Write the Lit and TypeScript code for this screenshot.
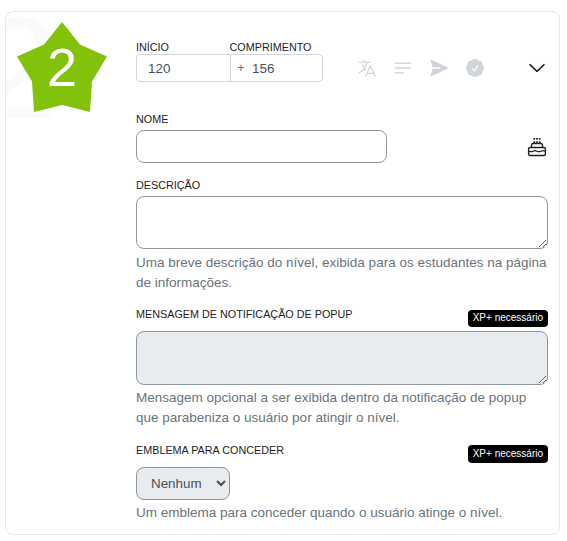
import { LitElement, html, css, svg } from "lit";
import { customElement } from "lit/decorators.js";

const translateIcon = svg`<svg width="20" height="20" viewBox="0.700 0.700 22.500 22.500" fill="none" stroke="currentColor" stroke-width="1.5" stroke-linecap="round" stroke-linejoin="round"><path d="m10.5 21 5.25-11.25L21 21m-9-3h7.500M3 5.621a48.474 48.474 0 0 1 6-.371m0 0c1.120 0 2.233.038 3.334.114M9 5.250V3m3.334 2.364C11.176 10.658 7.690 15.080 3 17.502m9.334-12.138c.896.061 1.785.147 2.666.257m-4.589 8.495a18.023 18.023 0 0 1-3.827-5.802"/></svg>`;
const linesIcon = svg`<svg width="20" height="20" viewBox="0 0 24 24" fill="none" stroke="currentColor" stroke-width="1.8" stroke-linecap="round"><path d="M3 6.300h18M3 12h18M3 17.700h9"/></svg>`;
const sendIcon = svg`<svg width="20" height="20" viewBox="0 0 24 24" fill="currentColor"><path d="M2.300 1.800Q1.600 1.500 1.700 2.500L4.300 11.100H13.500V12.900H4.300L1.700 21.500Q1.600 22.500 2.600 22.100L22 13Q23 12 22 11Z"/></svg>`;
const badgeIcon = svg`<svg width="20" height="20" viewBox="1.200 1.200 21.600 21.600" fill="currentColor"><path fill-rule="evenodd" d="M8.603 3.799A4.490 4.490 0 0 1 12 2.250c1.357 0 2.573.600 3.397 1.549a4.490 4.490 0 0 1 3.498 1.307 4.491 4.491 0 0 1 1.307 3.497A4.490 4.490 0 0 1 21.750 12a4.490 4.490 0 0 1-1.549 3.397 4.491 4.491 0 0 1-1.307 3.497 4.491 4.491 0 0 1-3.497 1.307A4.490 4.490 0 0 1 12 21.750a4.490 4.490 0 0 1-3.397-1.549 4.490 4.490 0 0 1-3.498-1.306 4.491 4.491 0 0 1-1.307-3.498A4.490 4.490 0 0 1 2.250 12c0-1.357.600-2.573 1.549-3.397a4.490 4.490 0 0 1 1.307-3.497 4.490 4.490 0 0 1 3.497-1.307Zm7.007 6.387a.75.75 0 1 0-1.220-.872l-3.236 4.530L9.530 12.220a.75.75 0 0 0-1.060 1.060l2.250 2.250a.75.75 0 0 0 1.140-.094l3.750-5.250Z"/></svg>`;
const chevronIcon = svg`<svg width="20" height="20" viewBox="0 0 24 24" fill="none" stroke="currentColor" stroke-width="1.800" stroke-linecap="round" stroke-linejoin="round"><path d="m20.500 8-8.500 8-8.500-8"/></svg>`;
const cakeIcon = svg`<svg width="20" height="20" viewBox="0 0 20 20" fill="none" stroke="currentColor" stroke-width="1.400" stroke-linejoin="round"><rect x="1.600" y="10.500" width="16.800" height="8" rx="1.500"/><path d="M4.500 10.500V8a1.500 1.500 0 0 1 1.500-1.500h8a1.500 1.500 0 0 1 1.500 1.500v2.500"/><path stroke-width="1.200" d="M2 14.200q2 1 4 0t4 0 4 0 4 0"/><path stroke-width="1.700" d="M7.300 1v1.700M10 1v1.700M12.700 1v1.700M7.300 4.200v1.800M10 4.200v1.800M12.700 4.200v1.800"/></svg>`;

@customElement("app-root")
export class AppRoot extends LitElement {
  static styles = css`
    :host {
      display: block;
      height: 541px;
      box-sizing: border-box;
      padding: 11px 7px 6px 5px;
      background: #fff;
      font: 13.4px/20px "Liberation Sans", Arial, sans-serif;
      color: #1d2125;
    }
    * { box-sizing: border-box; }
    svg { display: block; }
    .card {
      position: relative;
      display: flex;
      height: 524px;
      border: 1px solid #e5e7eb;
      border-radius: 8px;
      overflow: hidden;
    }
    .ghost {
      position: absolute;
      left: -28px;
      top: -15px;
      font-size: 144px;
      line-height: 144px;
      color: #f9fafb;
    }
    .side { width: 130px; padding: 10px 0 0 11px; flex: none; }
    .star { position: relative; width: 90px; height: 90px; }
    .number {
      position: absolute;
      inset: 0;
      text-align: center;
      font-size: 54px;
      line-height: 90px;
      color: #fff;
    }
    .form { flex: 1; min-width: 0; padding: 28px 11px 0 0; }
    .label { display: block; font-size: 10.8px; line-height: 14px; white-space: nowrap; }
    .row { display: flex; justify-content: space-between; }
    .head { height: 42px; margin-bottom: 30px; }
    .range { display: flex; width: 187px; }
    .start { width: 94px; }
    .length { width: 93px; }
    .length .label { margin-left: -0.5px; }
    .small {
      height: 28px;
      border: 1px solid #d1d5db;
      display: flex;
      align-items: center;
      color: #495057;
      padding: 1px 0 0 11px;
    }
    .start .small { border-radius: 4px 0 0 4px; width: 95px; }
    .length .small { border-radius: 0 4px 4px 0; padding-left: 6px; }
    .plus { color: #6b7280; width: 15px; margin-top: -2px; }
    .icons { display: flex; gap: 16px; color: #d1d5db; padding-top: 18px; margin-left: 34px; }
    .toggle { padding-top: 18px; margin-left: auto; margin-right: 1px; }
    .control {
      display: block;
      width: 100%;
      margin: 0;
      border: 1px solid #8f959e;
      border-radius: 8px;
      background: #fff;
      font: inherit;
      color: #495057;
    }
    .control:disabled { background: #e9ecef; opacity: 1; }
    .name { width: 251px; height: 33px; margin-top: 4px; }
    .cake { padding-top: 25px; margin-right: 1px; }
    .name-row { height: 51px; margin-bottom: 15px; }
    .description { height: 53px; margin-top: 4px; }
    .message { height: 54px; }
    .help { color: #6a737b; margin: 4px 0 0; font-size: 13.5px; white-space: nowrap; }
    .message-help { margin-top: 3px; }
    .locked { height: 24px; margin-top: 14px; }
    .locked.second { margin-top: 15px; }
    .tag {
      height: 17px;
      margin-top: 3px;
      padding: 0 5px;
      border-radius: 4px;
      background: #000;
      color: #fff;
      font-size: 10px;
      line-height: 16px;
    }
    .second .tag { height: 18px; margin-top: 2px; line-height: 18px; }
    .award { width: 94px; height: 33px; padding: 0 0 0 10px; }
    .award-help { margin-top: 3px; }
  `;

  render() {
    return html`
      <div class="card">
        <div class="ghost">2</div>
        <div class="side">
          <div class="star">
            <svg width="90" height="90" viewBox="0 0 90 90"><path fill="#82c20a" d="M45 0 63 22.500 90 34.500 75 59.500 73 90 45 83 17 90 15 59.500 0 34.500 27 22.500Z"/></svg>
            <div class="number">2</div>
          </div>
        </div>
        <div class="form">
          <div class="row head">
            <div class="range">
              <div class="start"><span class="label">INÍCIO</span><div class="small">120</div></div>
              <div class="length"><span class="label">COMPRIMENTO</span><div class="small"><span class="plus">+</span>156</div></div>
            </div>
            <div class="icons">${translateIcon}${linesIcon}${sendIcon}${badgeIcon}</div>
            <div class="toggle">${chevronIcon}</div>
          </div>
          <div class="row name-row">
            <div><label class="label" for="name">NOME</label><input id="name" class="control name" /></div>
            <div class="cake">${cakeIcon}</div>
          </div>
          <label class="label" for="description">DESCRIÇÃO</label>
          <textarea id="description" class="control description"></textarea>
          <p class="help">Uma breve descrição do nível, exibida para os estudantes na página<br />de informações.</p>
          <div class="row locked"><label class="label" for="message">MENSAGEM DE NOTIFICAÇÃO DE POPUP</label><span class="tag">XP+ necessário</span></div>
          <textarea id="message" class="control message" disabled></textarea>
          <p class="help message-help">Mensagem opcional a ser exibida dentro da notificação de popup<br />que parabeniza o usuário por atingir o nível.</p>
          <div class="row locked second"><label class="label" for="award">EMBLEMA PARA CONCEDER</label><span class="tag">XP+ necessário</span></div>
          <select id="award" class="control award" disabled><option>Nenhum</option></select>
          <p class="help award-help">Um emblema para conceder quando o usuário atinge o nível.</p>
        </div>
      </div>
    `;
  }
}
